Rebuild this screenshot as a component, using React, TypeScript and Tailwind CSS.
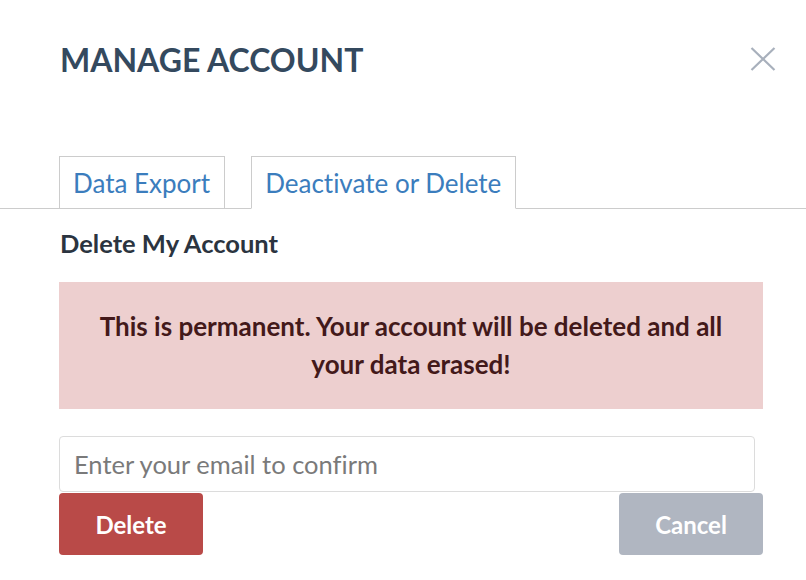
import React from "react";

export default function App() {
  return (
    <div
      className="w-[806px] h-[580px] bg-white overflow-hidden [font-variant-ligatures:none]"
      style={{ fontFamily: "Lato, 'Open Sans', sans-serif" }}
    >
      <div className="flex items-center justify-between pt-[40px] pl-[60px] pr-[30px]">
        <h1 className="text-[32px] leading-[40px] font-bold text-[#34495e]">
          MANAGE ACCOUNT
        </h1>
        <button className="w-[26px] h-[24px] -mt-[3px] flex items-center justify-center">
          <svg width="26" height="24" viewBox="0 0 26 24" fill="none">
            <path d="M1.5 1 L24.5 23 M24.5 1 L1.5 23" stroke="#a8b0bc" strokeWidth="2.2" />
          </svg>
        </button>
      </div>

      <div className="mt-[76px] flex gap-[26px] pl-[59px] border-b border-[#cccccc]">
        <div className="-mb-px border border-[#cccccc] pl-[13px] pr-[14px] pt-[11px] pb-[10px] text-[26px] leading-[30px] text-[#3b7dbd] bg-white">
          Data Export
        </div>
        <div className="-mb-px border border-[#cccccc] border-b-white pl-[13px] pr-[14px] pt-[11px] pb-[10px] text-[26px] leading-[30px] text-[#3b7dbd] bg-white">
          Deactivate or Delete
        </div>
      </div>

      <div className="pl-[59px] pr-[43px]">
        <h2 className="mt-[19px] text-[25.5px] leading-[30px] font-bold text-[#2b3440] pl-px">
          Delete My Account
        </h2>

        <div className="mt-[24px] bg-[#edcfcf] pt-[25px] pb-[26px] px-[40px] text-center text-[26px] leading-[38px] font-bold text-[#43191a]">
          This is permanent. Your account will be deleted and all your data erased!
        </div>

        <input
          type="text"
          placeholder="Enter your email to confirm"
          className="mt-[27px] block w-[696px] h-[56px] border border-[#dcdcdc] rounded-[4px] pl-[14px] text-[25.5px] text-[#333] placeholder:text-[#7a7a7a] outline-none"
          style={{ fontFamily: "Lato, 'Open Sans', sans-serif" }}
        />

        <div className="mt-px flex justify-between">
          <button className="w-[144px] h-[62px] pt-[2px] rounded-[4px] bg-[#b94a48] text-white text-[24px] font-bold">
            Delete
          </button>
          <button className="w-[144px] h-[62px] pt-[2px] rounded-[4px] bg-[#b0b6c1] text-white text-[24px] font-bold">
            Cancel
          </button>
        </div>
      </div>
    </div>
  );
}
